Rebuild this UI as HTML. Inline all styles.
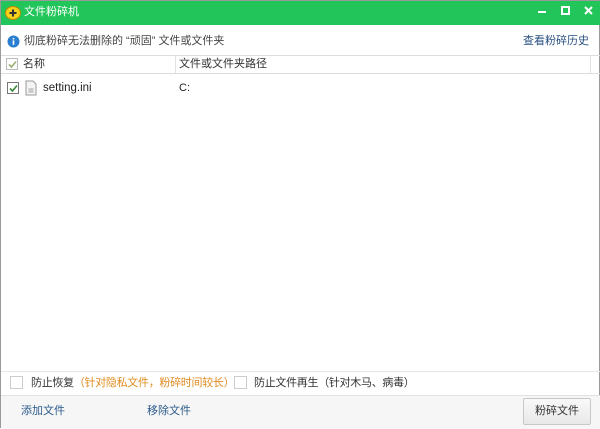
<!DOCTYPE html>
<html><head><meta charset="utf-8"><style>
*{margin:0;padding:0;box-sizing:border-box}
body{width:600px;height:428px;overflow:hidden;background:#fff;font-family:"Liberation Sans","Noto Sans CJK SC",sans-serif;font-size:11px;color:#333;position:relative;border:1px solid #9a9a9a}
.abs{position:absolute;line-height:13px}
.title{left:0;top:0;width:600px;height:24px;background:#22c55a;color:#fff;font-size:11px}
.cb{width:12px;height:12px;border:1px solid #bbb;background:#fff}
</style></head><body>
<div class="abs title">
 <svg class="abs" style="left:4px;top:4px" width="16" height="16" viewBox="0 0 16 16"><ellipse cx="8" cy="8" rx="7.5" ry="6.5" fill="#f7d21a" stroke="#b88a00"/><path d="M8 4.5v7M4.5 8h7" stroke="#333" stroke-width="2"/></svg>
 <span class="abs" style="left:23px;top:5px">文件粉碎机</span>
 <div class="abs" style="left:537px;top:10px;width:8px;height:2px;background:#fff"></div>
 <div class="abs" style="left:560px;top:5px;width:9px;height:9px;border:2px solid #fff"></div>
 <svg class="abs" style="left:583px;top:5px" width="9" height="9"><path d="M1 1L8 8M8 1L1 8" stroke="#fff" stroke-width="2"/></svg>
</div>
<svg class="abs" style="left:6px;top:34px" width="13" height="13"><circle cx="6.5" cy="6.5" r="6" fill="#2a7fd0"/><rect x="5.7" y="5.3" width="1.6" height="4.5" fill="#fff"/><rect x="5.7" y="3" width="1.6" height="1.5" fill="#fff"/></svg>
<span class="abs" style="left:23px;top:34px;color:#444">彻底粉碎无法删除的 “顽固” 文件或文件夹</span>
<span class="abs" style="left:522px;top:34px;color:#2a4f80">查看粉碎历史</span>
<div class="abs" style="left:0;top:54px;width:600px;height:1px;background:#ddd"></div>
<div class="abs" style="left:0;top:72px;width:600px;height:1px;background:#ddd"></div>
<div class="abs" style="left:174px;top:55px;width:1px;height:17px;background:#e2e2e2"></div>
<div class="abs" style="left:589px;top:55px;width:1px;height:17px;background:#e2e2e2"></div>
<div class="abs cb" style="left:5px;top:57px"></div>
<svg class="abs" style="left:6px;top:58px" width="11" height="11"><path d="M2 5.5L4.5 8L9 2.5" stroke="#9ab070" stroke-width="1.6" fill="none"/></svg>
<span class="abs" style="left:22px;top:57px">名称</span>
<span class="abs" style="left:178px;top:57px">文件或文件夹路径</span>
<div class="abs cb" style="left:6px;top:81px;border-color:#777"></div>
<svg class="abs" style="left:7px;top:82px" width="11" height="11"><path d="M2 5.5L4.5 8L9 2.5" stroke="#3a8a3a" stroke-width="1.6" fill="none"/></svg>
<svg class="abs" style="left:24px;top:79px" width="12" height="16"><path d="M1 1h7l3 3v11H1z" fill="#f4f4f4" stroke="#999"/><rect x="3.5" y="8" width="5" height="5" fill="#ccc"/></svg>
<span class="abs" style="left:42px;top:81px;font-size:11.5px;color:#222">setting.ini</span>
<span class="abs" style="left:178px;top:81px;color:#222">C:</span>
<div class="abs" style="left:0;top:370px;width:600px;height:1px;background:#e6e6e6"></div>
<div class="abs cb" style="left:9px;top:375px;width:13px;height:13px;border-color:#ccc"></div>
<span class="abs" style="left:30px;top:376px;letter-spacing:-0.3px">防止恢复<span style="color:#e08c20">（针对隐私文件，粉碎时间较长）</span></span>
<div class="abs cb" style="left:233px;top:375px;width:13px;height:13px;border-color:#ccc"></div>
<span class="abs" style="left:253px;top:376px;letter-spacing:-0.3px">防止文件再生（针对木马、病毒）</span>
<div class="abs" style="left:0;top:394px;width:600px;height:34px;background:#f6f6f6;border-top:1px solid #e2e2e2"></div>
<span class="abs" style="left:20px;top:404px;color:#2a5a8a">添加文件</span>
<span class="abs" style="left:146px;top:404px;color:#2a5a8a">移除文件</span>
<div class="abs" style="left:522px;top:397px;width:68px;height:27px;border:1px solid #c8c8c8;background:linear-gradient(#f9f9f9,#e8e8e8);border-radius:2px;text-align:center;line-height:25px;color:#333">粉碎文件</div>
</body></html>
